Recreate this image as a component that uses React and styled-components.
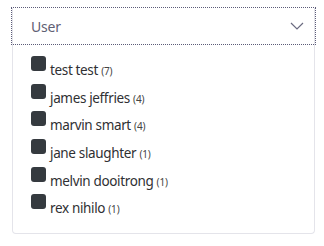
import React from "react";
import styled, { createGlobalStyle } from "styled-components";

const Global = createGlobalStyle`
  html, body { margin: 0; padding: 0; background: #ffffff; }
  body { font-family: "Noto Sans", sans-serif; }
`;

const Page = styled.div`
  padding: 8px 9px 0 12px;
`;

const Card = styled.div`
  width: 303px;
  box-sizing: border-box;
  border: 1px solid #e4e4ea;
  border-top: none;
  border-radius: 0 0 4px 4px;
  background: #fff;
  height: 226px;
  display: flex;
  flex-direction: column;
`;

const Header = styled.button`
  all: unset;
  box-sizing: border-box;
  height: 36px;
  margin: 0 -1px;
  display: flex;
  align-items: center;
  justify-content: space-between;
  padding: 0 11px 0 19px;
  outline: 1px dotted #5c5c78;
  outline-offset: 0;
  font-family: "Noto Sans", sans-serif;
  font-size: 14px;
  letter-spacing: -0.2px;
  color: #5f6074;
`;

const List = styled.ul`
  list-style: none;
  margin: 0;
  padding: 12px 0 0 18px;
  display: flex;
  flex-direction: column;
`;

const Row = styled.li`
  display: flex;
  align-items: flex-start;
  height: 27.7px;
`;

const Box = styled.span`
  width: 15px;
  height: 15px;
  border-radius: 3px;
  background: #353a3f;
  margin-right: 4px;
  flex: none;
`;

const Label = styled.span`
  font-family: "Noto Sans", sans-serif;
  font-size: 13.5px;
  letter-spacing: -0.35px;
  color: #2f3033;
  margin-top: 4px;
  line-height: 20px;
`;

const Count = styled.span`
  font-size: 10px;
  letter-spacing: -0.2px;
  color: #444;
`;

const users = [
  ["test test", 7],
  ["james jeffries", 4],
  ["marvin smart", 4],
  ["jane slaughter", 1],
  ["melvin dooitrong", 1],
  ["rex nihilo", 1],
];

export default function App() {
  return (
    <>
      <Global />
      <Page>
        <Card>
          <Header>
            <span>User</span>
            <svg width="14" height="8" viewBox="0 0 14 8" fill="none">
              <path d="M1 1l6 6 6-6" stroke="#6b6b80" strokeWidth="1.2" />
            </svg>
          </Header>
          <List>
            {users.map(([name, n]) => (
              <Row key={name}>
                <Box />
                <Label>
                  {name} <Count>({n})</Count>
                </Label>
              </Row>
            ))}
          </List>
        </Card>
      </Page>
    </>
  );
}
